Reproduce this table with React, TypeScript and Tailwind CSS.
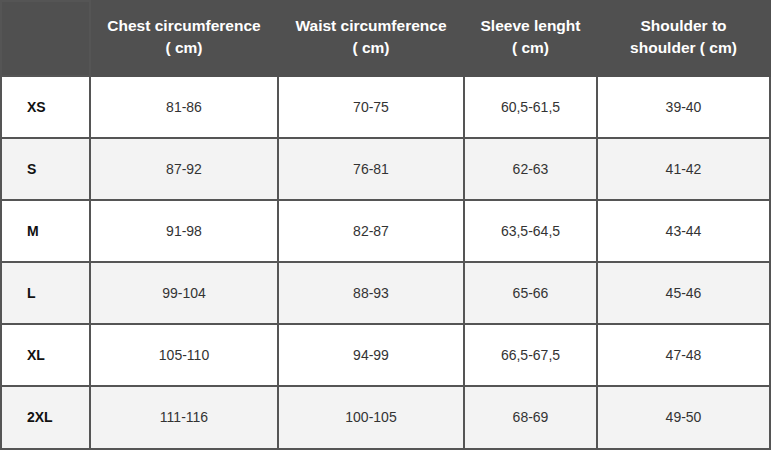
import * as React from "react"

const headers = [
    ["Chest circumference", "( cm)"],
    ["Waist circumference", "( cm)"],
    ["Sleeve lenght", "( cm)"],
    ["Shoulder to", "shoulder ( cm)"],
]

const rows = [
    ["XS", "81-86", "70-75", "60,5-61,5", "39-40"],
    ["S", "87-92", "76-81", "62-63", "41-42"],
    ["M", "91-98", "82-87", "63,5-64,5", "43-44"],
    ["L", "99-104", "88-93", "65-66", "45-46"],
    ["XL", "105-110", "94-99", "66,5-67,5", "47-48"],
    ["2XL", "111-116", "100-105", "68-69", "49-50"],
]

const widths = ["w-[89px]", "w-[188px]", "w-[186px]", "w-[133px]", "w-[173px]"]

export default function App() {
    return (
        <div className="w-[772px] h-[451px] bg-white font-['Liberation_Sans',Arial,sans-serif]">
            <table className="w-[771px] table-fixed border-collapse border-2 border-[#555]">
                <colgroup>
                    {widths.map((w, i) => (
                        <col key={i} className={w} />
                    ))}
                </colgroup>
                <thead>
                    <tr className="h-[75px] bg-[#505050]">
                        <th className="border-2 border-[#555]" />
                        {headers.map((h) => (
                            <th
                                key={h[0]}
                                className="border-2 border-[#505050] pb-[4px] text-center text-[15.5px] leading-[22px] font-bold text-white"
                            >
                                {h[0]}
                                <br />
                                {h[1]}
                            </th>
                        ))}
                    </tr>
                </thead>
                <tbody>
                    {rows.map((r, i) => (
                        <tr
                            key={r[0]}
                            className={
                                (i === rows.length - 1 ? "h-[63px] " : "h-[62px] ") +
                                (i % 2 === 1 ? "bg-[#f3f3f3]" : "bg-white")
                            }
                        >
                            <td className="border-2 border-[#555] pl-[25px] text-[14px] font-bold text-[#111]">{r[0]}</td>
                            {r.slice(1).map((v, j) => (
                                <td key={j} className="border-2 border-[#555] text-center text-[14px] text-[#333]">
                                    {v}
                                </td>
                            ))}
                        </tr>
                    ))}
                </tbody>
            </table>
        </div>
    )
}
